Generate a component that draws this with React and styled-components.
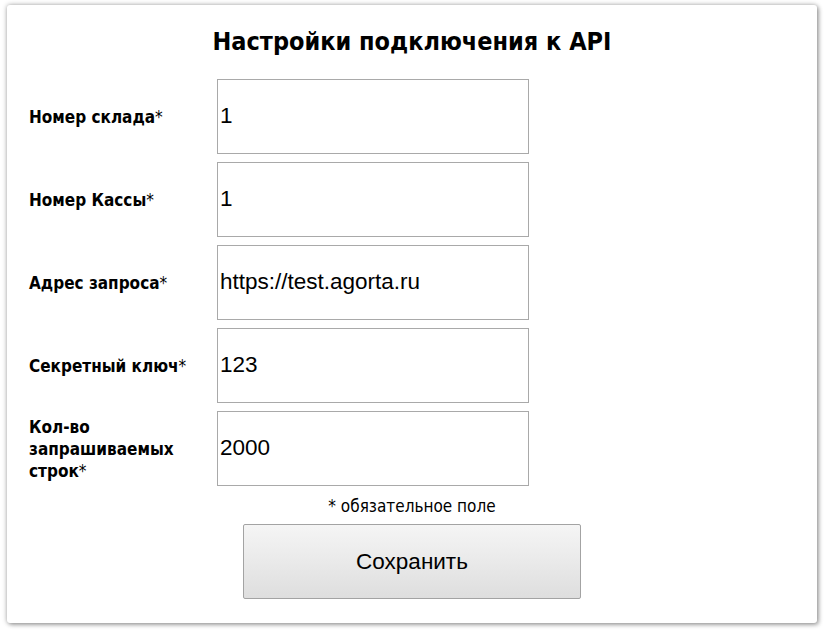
import styled, { createGlobalStyle } from "styled-components";

const GlobalStyle = createGlobalStyle`
  html, body {
    margin: 0;
    padding: 0;
    background: #ffffff;
  }
`;

const Page = styled.div`
  padding: 5px 12px 7px 7px;
`;

const Card = styled.form`
  box-sizing: border-box;
  width: 810px;
  height: 618px;
  background: #ffffff;
  border-radius: 3px;
  box-shadow: 0 0 5px rgba(0, 0, 0, 0.35), 2px 2px 4px rgba(0, 0, 0, 0.25);
  padding: 23px 22px 0 22px;
  display: flex;
  flex-direction: column;
`;

const Title = styled.h1`
  margin: 0 0 23px;
  text-align: center;
  font-family: "DejaVu Sans Condensed", "DejaVu Sans", sans-serif;
  font-weight: bold;
  font-size: 25px;
  line-height: 28px;
  color: #000;
`;

const Fields = styled.div`
  display: grid;
  grid-template-columns: 188px 312px;
  grid-auto-rows: 75px;
  row-gap: 8px;
`;

const Label = styled.label`
  display: flex;
  align-items: center;
  padding-right: 12px;
  font-family: "DejaVu Sans Condensed", "DejaVu Sans", sans-serif;
  font-weight: bold;
  font-size: 17px;
  line-height: 22px;
  color: #000;

  span {
    font-weight: normal;
  }
`;

const Input = styled.input`
  box-sizing: border-box;
  width: 312px;
  height: 75px;
  margin: 0;
  padding: 0 2px 2px;
  border: 1px solid #a9a9a9;
  font-family: "Liberation Sans", Arial, sans-serif;
  font-size: 22.5px;
  color: #000;
  outline: none;
`;

const Note = styled.p`
  margin: 10px 0 8px;
  text-align: center;
  font-family: "DejaVu Sans Condensed", "DejaVu Sans", sans-serif;
  font-size: 17px;
  line-height: 20px;
  color: #000;
`;

const SaveButton = styled.button`
  align-self: center;
  width: 338px;
  height: 75px;
  border: 1px solid #a3a3a3;
  border-radius: 2px;
  background: linear-gradient(#f5f5f5, #dedede);
  font-family: "Liberation Sans", Arial, sans-serif;
  font-size: 22.5px;
  color: #000;
`;

const fields = [
  { label: "Номер склада", value: "1" },
  { label: "Номер Кассы", value: "1" },
  { label: "Адрес запроса", value: "https://test.agorta.ru" },
  { label: "Секретный ключ", value: "123" },
  { label: "Кол-во запрашиваемых строк", value: "2000" },
];

const App = () => {
  return (
    <Page>
      <GlobalStyle />
      <Card onSubmit={(e) => e.preventDefault()}>
        <Title>Настройки подключения к API</Title>
        <Fields>
          {fields.map((f) => [
            <Label key={f.label + "-l"}>
              <div>
                {f.label}
                <span>*</span>
              </div>
            </Label>,
            <Input key={f.label + "-i"} defaultValue={f.value} />,
          ])}
        </Fields>
        <Note>* обязательное поле</Note>
        <SaveButton type="submit">Сохранить</SaveButton>
      </Card>
    </Page>
  );
};

export default App;
